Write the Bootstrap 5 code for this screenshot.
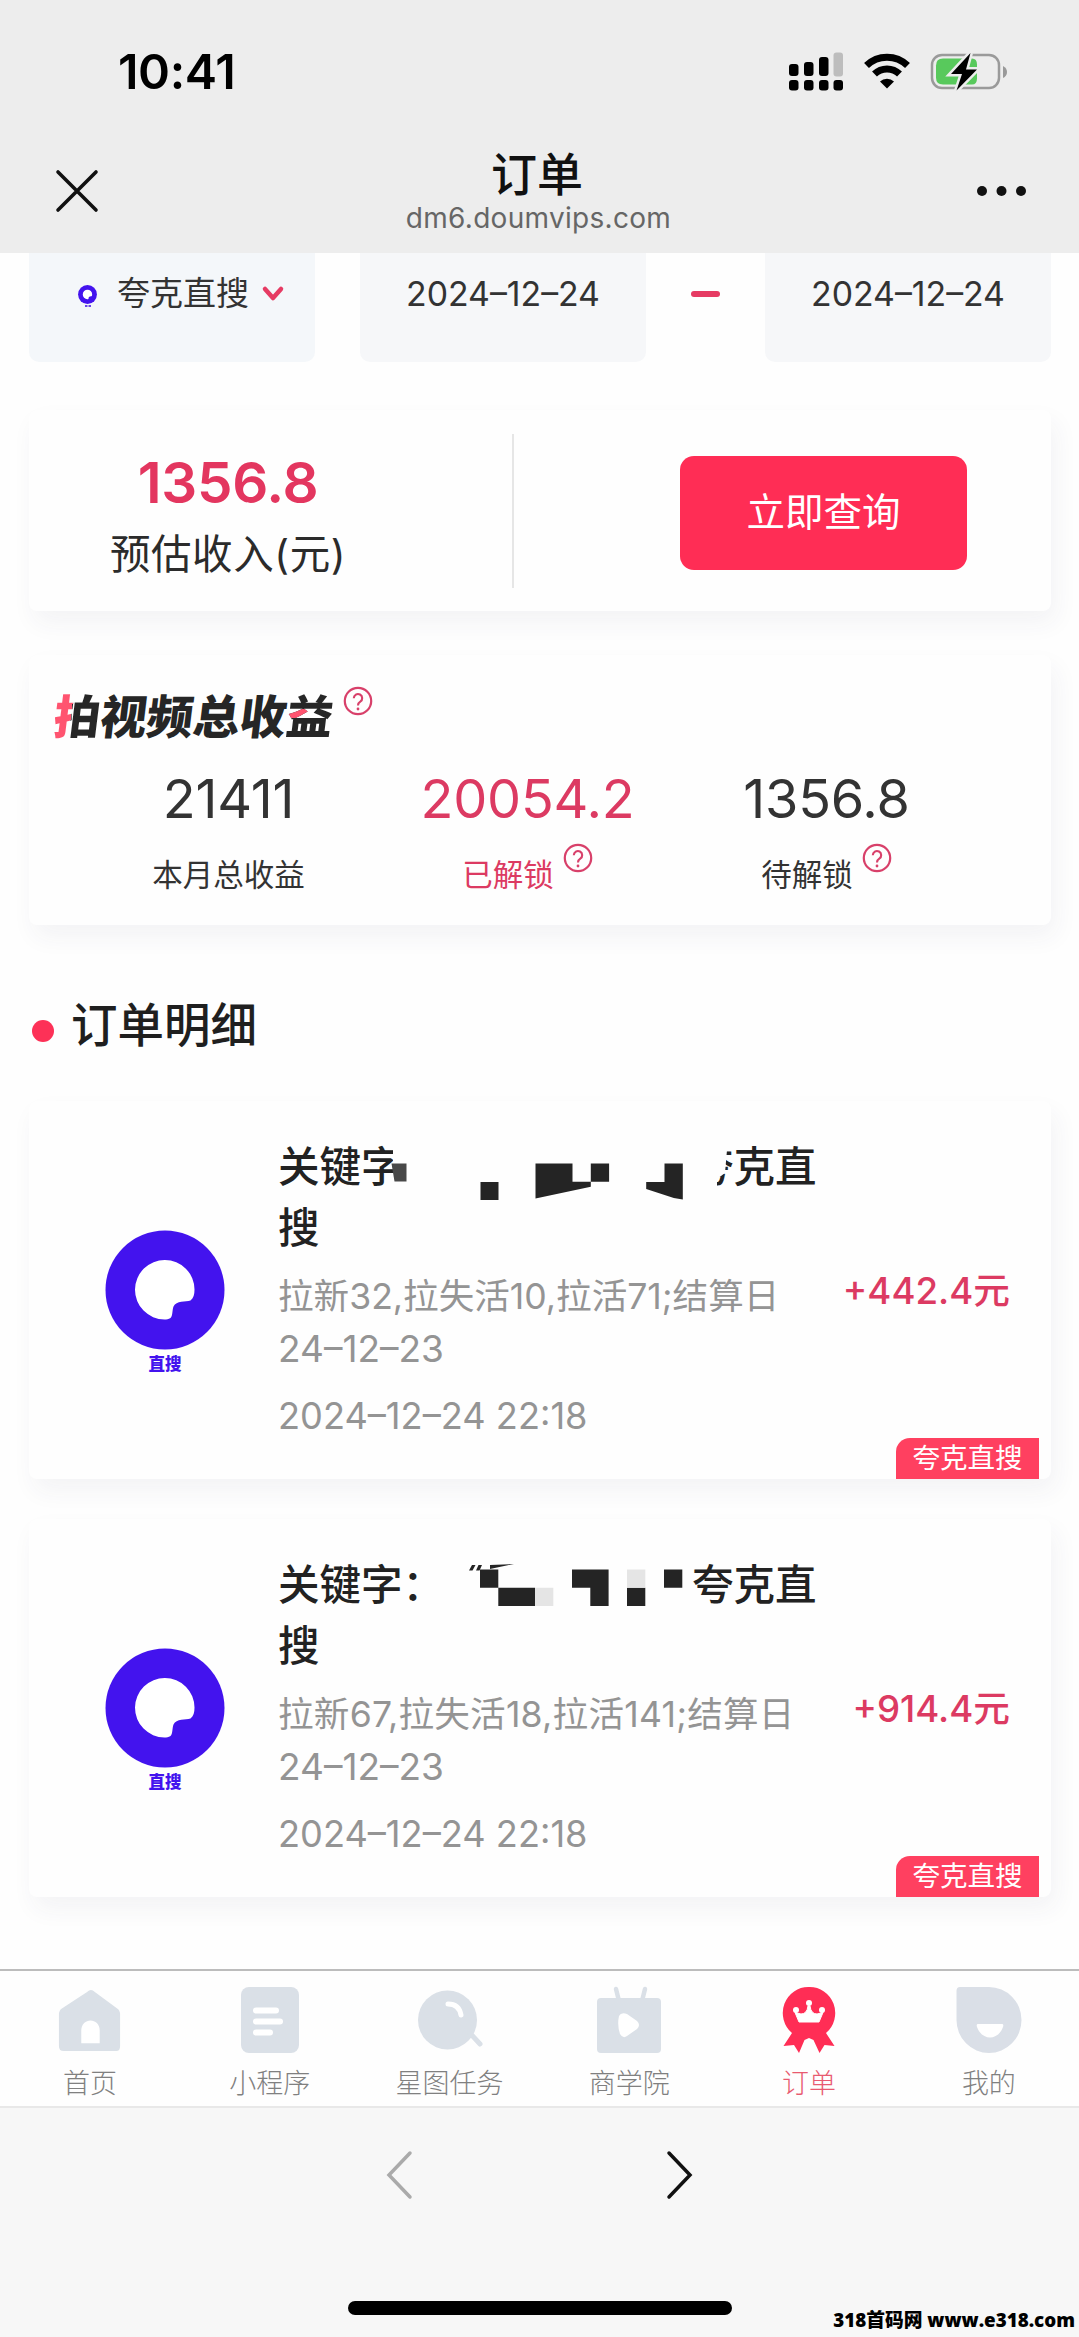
<!DOCTYPE html>
<html lang="zh-CN">
<head>
<meta charset="utf-8">
<meta name="viewport" content="width=device-width, initial-scale=1">
<title>订单</title>
<link href="https://cdn.jsdelivr.net/npm/bootstrap@5.3.0/dist/css/bootstrap.min.css" rel="stylesheet">
<style>
body{font-family:Inter,"Noto Sans CJK SC",sans-serif;color:#222;background:#fefefe;line-height:1;overflow:hidden}
.screen{width:1079px;height:2337px}
svg{display:block;flex:none;overflow:visible}
.topbar{background:#ededed;height:253px}
.status{height:144px;padding:0 73px 0 118px}
.status svg{margin-bottom:13px}
.clock{font-size:48.5px;font-weight:600;color:#000;letter-spacing:-.4px}
.titlebar{height:109px;padding:0 53px 0 56px}
.close-x{margin-top:26px}
.more-dots{margin-top:41px}
.page-title{font-size:46px;font-weight:500;line-height:46px;color:#111;margin-top:7px}
.domain{font-size:28px;color:#666;line-height:30px;letter-spacing:.3px;margin-top:6px;padding-left:3px}
.filters{padding:0 28px 0 29px;height:109px}
.filter-box{width:286px;height:109px;background:#f6f7f9;border-radius:0 0 10px 10px;padding-bottom:28px;font-size:33.8px;color:#333;white-space:nowrap}
.source-box{padding-left:49px;font-size:33px;background:#f4f7fa}
.dash{margin-bottom:28px}
.pink{color:#dc3a62}
.panel{margin:0 28px 0 29px;background:#fefefe;border-radius:8px;box-shadow:5px 12px 24px rgba(60,60,100,.055)}
.estimate{margin-top:48px;height:201px}
.est-side{width:398px;padding-top:11px}
.est-num{font-size:56.500px;font-weight:600;line-height:58px;letter-spacing:-.3px;color:#e3365f}
.est-label{font-size:40.5px;line-height:46px;margin-top:20px;color:#2b2b2b;letter-spacing:.6px}
.vline{width:2px;height:154px;background:#e6e6e6;margin-left:85px}
.query-side{padding:5px 84px 0 0}
.query{width:287px;height:114px;border-radius:14px;background:#ff2d55;color:#fff;font-size:38.5px;border:0}
.income{margin-top:44px;height:270px;padding:34px 0 0 25px}
.income-head svg{margin:-3px 0 0 10px}
.brand{font-size:46.500px;font-weight:900;line-height:56px;transform:skewX(-7deg);color:#262626}
.brand-red{background:linear-gradient(90deg,#ff5470 0 36%,#262626 36%);-webkit-background-clip:text;background-clip:text;color:transparent}
.brand-end{background:linear-gradient(#ff5470,#ff5470) 0 42%/45% 16% no-repeat,#262626;-webkit-background-clip:text;background-clip:text;color:transparent}
.sums{padding:24px 0 0 25px}
.sum-col{width:299px}
.sum-num{font-size:54px;line-height:60px;font-weight:400;letter-spacing:-.2px}
.sum-label{font-size:30.5px;line-height:36px;margin-top:28px}
.sum-label svg{margin:-14px 0 0 9px}
.ink{color:#333}
.section-head{height:60px;margin:70px 0 0 32px}
.section-name{font-size:46.5px;font-weight:500;color:#1f1f1f}
.dot{width:22px;height:22px;border-radius:50%;background:#fd3157;margin:11px 17px 0 0}
.order{height:378px;position:relative;padding:36px 41px 0 76px}
.order-first{margin-top:46px}
.order-next{margin-top:40px}
.order-logo{width:120px;margin-top:93px}
.logo-name{font-size:16.5px;font-weight:900;color:#4313ee;margin-top:6px}
.order-body{width:545px;margin-left:53px}
.kw{font-size:41.5px;line-height:61px;font-weight:500;white-space:nowrap}
.kw svg{transform:translate(1px,-2px);z-index:1}
.detail{font-size:35.6px;line-height:52px;color:#949494;margin-top:12px;white-space:nowrap}
.detail-wide{letter-spacing:.25px}
.detail-date{font-size:37px}
.stamp{font-size:36.2px;line-height:44px;color:#949494;margin-top:18px}
.amount{font-size:36.7px;font-weight:500;line-height:44px;margin-top:132px;white-space:nowrap}
.tag{position:absolute;right:12px;bottom:0;width:143px;height:41px;background:#ff4060;color:#fff;font-size:27.5px;border-radius:14px 0 0 0}
.tabs{height:139px;border-top:2px solid #bcbcbc;border-bottom:2px solid #e8e8e8;background:#fefefe}
.tab-item{width:179.8px;font-size:27px;font-weight:300;color:#808080;padding-top:15px}
.tab-item span{line-height:34px;margin-top:11px}
.tab-item.active{color:#e85a70}
.browser{background:#f7f7f7;height:229px;position:relative}
.navs{height:136px;padding:0 0 2px 0}
.nav-next{margin-left:255px}
.homebar{width:384px;height:14px;border-radius:7px;background:#000;margin:57px auto 0}
.watermark{position:absolute;right:4px;bottom:6px;font-family:"Open Sans","Noto Sans CJK SC",sans-serif;font-weight:800;font-size:18.8px;line-height:22px;color:#000;white-space:nowrap}
</style>
</head>
<body>
<svg width="0" height="0" class="position-absolute">
<symbol id="quark" viewBox="0 0 120 120"><circle cx="60" cy="60" r="59.5" fill="#4313ee"/><path d="M60 30a29.500 29.500 0 0 1 29.500 29.500c0 5-1 8.500-4 11-5 1.500-14 0-17 6-1.500 4-.5 9-3 11.500-2 1.500-4 1.500-6 1.500A29.600 29.600 0 0 1 60 30z" fill="#fff"/></symbol>
<symbol id="ask" viewBox="0 0 30 30"><circle cx="15" cy="15" r="13.200" fill="none" stroke="#d8406a" stroke-width="2.200"/><path d="M10.800 12.200a4.200 4.200 0 1 1 6.500 3.500c-1.700 1.100-2.300 1.900-2.300 3.700" fill="none" stroke="#d8406a" stroke-width="2.100"/><circle cx="15" cy="23" r="1.400" fill="#d8406a"/></symbol>
</svg>
<div class="screen d-flex flex-column">
<header class="topbar">
  <div class="status d-flex align-items-center justify-content-between">
    <div class="clock">10:41</div>
    <svg width="218" height="44" viewBox="0 0 218 44">
      <g fill="#000"><rect x="1" y="20" width="9.500" height="12" rx="3"/><rect x="16" y="18" width="9.500" height="14" rx="3"/><rect x="31" y="13" width="9.500" height="19" rx="3"/><rect x="1" y="36" width="9.500" height="10.500" rx="3"/><rect x="16" y="36" width="9.500" height="10.500" rx="3"/><rect x="31" y="36" width="9.500" height="10.500" rx="3"/><rect x="45.500" y="36" width="9.500" height="10.500" rx="3"/></g>
      <rect x="45.500" y="8.500" width="9.500" height="24" rx="3" fill="#bdbdbd"/>
      <g fill="none" stroke="#000" stroke-width="7"><path d="M78.500 21.500a29.500 29.500 0 0 1 41 0"/><path d="M86.500 30a18 18 0 0 1 25 0"/></g>
      <path d="M92 37.500a10 10 0 0 1 14 0l-7 7z"/>
      <rect x="144" y="11" width="67" height="33" rx="10" fill="none" stroke="#9a9a9a" stroke-width="2.500"/>
      <path d="M155 14.500h29q5 0 5 6v14q0 6-5 6h-29q-7 0-7-7v-12q0-7 7-7z" fill="#58c95c"/>
      <path d="M215 22q4 2 4 6t-4 6z" fill="#999"/>
      <path d="M182.500 9l-19.500 21h11l-5.500 16.500L189 25.500h-11z" fill="#000" stroke="#ededed" stroke-width="5" paint-order="stroke"/>
    </svg>
  </div>
  <div class="titlebar d-flex justify-content-between">
    <svg class="close-x" width="42" height="42" viewBox="0 0 42 42"><path d="M2 2l38 38M40 2L2 40" stroke="#111" stroke-width="3.600" stroke-linecap="round"/></svg>
    <div class="text-center"><div class="page-title">订单</div><div class="domain">dm6.doumvips.com</div></div>
    <svg class="more-dots" width="50" height="12" viewBox="0 0 50 12"><g fill="#111"><circle cx="6" cy="6" r="5"/><circle cx="25.500" cy="6" r="5"/><circle cx="45" cy="6" r="5"/></g></svg>
  </div>
</header>

<main class="flex-grow-1">
  <div class="filters d-flex align-items-center justify-content-between">
    <div class="filter-box source-box d-flex align-items-center">
      <div class="d-flex flex-column align-items-center pt-1 me-3 pe-1"><svg width="19" height="19"><use href="#quark"/></svg><svg width="6" height="3"><path d="M0 2h2.500M3.500 2h2.500" stroke="#6a45e8" stroke-width="2"/></svg></div>
      <span>夸克直搜</span>
      <svg class="ms-3" width="20" height="14" viewBox="0 0 20 14"><path d="M0 2l8 9 8-9" fill="none" stroke="#e63b63" stroke-width="4.500" stroke-linecap="round" stroke-linejoin="round"/></svg>
    </div>
    <div class="filter-box d-flex align-items-center justify-content-center">2024–12–24</div>
    <svg class="dash" width="29" height="6"><rect width="29" height="6" rx="3" fill="#e63b63"/></svg>
    <div class="filter-box d-flex align-items-center justify-content-center">2024–12–24</div>
  </div>

  <section class="panel estimate d-flex align-items-center">
    <div class="est-side text-center"><div class="est-num">1356.8</div><div class="est-label">预估收入(元)</div></div>
    <div class="vline"></div>
    <div class="query-side flex-grow-1 d-flex justify-content-end"><button class="query btn p-0">立即查询</button></div>
  </section>

  <section class="panel income">
    <div class="income-head d-flex">
      <div class="brand"><span class="brand-red">拍</span>视频总收<span class="brand-end">益</span></div>
      <svg width="30" height="30"><use href="#ask"/></svg>
    </div>
    <div class="sums d-flex text-center">
      <div class="sum-col ink"><div class="sum-num">21411</div><div class="sum-label">本月总收益</div></div>
      <div class="sum-col pink"><div class="sum-num">20054.2</div><div class="sum-label d-flex justify-content-center"><span>已解锁</span><svg width="30" height="30"><use href="#ask"/></svg></div></div>
      <div class="sum-col ink"><div class="sum-num">1356.8</div><div class="sum-label d-flex justify-content-center"><span>待解锁</span><svg width="30" height="30"><use href="#ask"/></svg></div></div>
    </div>
  </section>

  <div class="section-head d-flex align-items-center"><i class="dot"></i><span class="section-name">订单明细</span></div>

  <article class="panel order order-first d-flex">
    <div class="order-logo d-flex flex-column align-items-center"><svg width="120" height="120"><use href="#quark"/></svg><div class="logo-name">直搜</div></div>
    <div class="order-body">
      <div class="kw"><div class="d-flex"><span>关键字</span>
        <svg width="289.500" height="61" viewBox="0 0 289.500 61"><path d="M-11 5H331V15H323L321 38 313 44V57H-11z" fill="#fefefe"/><path d="M-12.500 28.500h15v18h-12z" fill="#484848"/><g fill="#242424"><path d="M76.500 47h18v18h-18zM131.500 28.500h37v18.300h18.300v5l-55.300 11.700zM186.800 28.500h18.300v18.300h-18.300zM260.500 28.500h18.300v36l-9-1.500-27.600-9v-7h18.300z"/></g></svg>
        <span>夸克直</span></div><div>搜</div></div>
      <div class="detail">拉新32,拉失活10,拉活71;结算日<br><span class="detail-date">24–12–23</span></div>
      <div class="stamp">2024–12–24 22:18</div>
    </div>
    <div class="amount pink ms-auto">+442.4元</div>
    <div class="tag d-flex align-items-center justify-content-center">夸克直搜</div>
  </article>

  <article class="panel order order-next d-flex">
    <div class="order-logo d-flex flex-column align-items-center"><svg width="120" height="120"><use href="#quark"/></svg><div class="logo-name">直搜</div></div>
    <div class="order-body">
      <div class="kw"><div class="d-flex"><span>关键字：</span>
        <svg width="248" height="61" viewBox="0 0 248 61"><g fill="#242424"><path d="M35 16.500h18.300v18.300H90v18.300H53.300V34.800H35zM127 16.500h36.600v36.600h-18.300V34.800H127zM182 34.800h18.300v18.300H182zM219 16.500h18.300v18.300H219zM27 12h3.500l-3 5.500h-3.500zM33.500 12h3.500l-2.500 5.500h-3.500zM45 12l24-1L45 16z"/></g><path d="M90 34.800h18.300v18.300H90zM182 16.500h18.300v18.300H182z" fill="#e5e5e5"/></svg>
        <span>夸克直</span></div><div>搜</div></div>
      <div class="detail"><span class="detail-wide">拉新67,拉失活18,拉活141;结算日</span><br><span class="detail-date">24–12–23</span></div>
      <div class="stamp">2024–12–24 22:18</div>
    </div>
    <div class="amount pink ms-auto">+914.4元</div>
    <div class="tag d-flex align-items-center justify-content-center">夸克直搜</div>
  </article>
</main>

<nav class="tabs d-flex">
  <div class="tab-item d-flex flex-column align-items-center"><svg width="66" height="70" viewBox="0 0 68 70"><path d="M35 3q-2 0-4 2L5 22q-3 2-3 6v33q0 5 5 5h54q4 0 4-5V28q0-4-3-6L39 5q-2-2-4-2z" fill="#dae0e7"/><path d="M25 58V45c0-14 19-14 19 0v13z" fill="#fff"/></svg><span>首页</span></div>
  <div class="tab-item d-flex flex-column align-items-center"><svg width="58" height="70" viewBox="0 0 58 70"><rect y="1" width="58" height="66" rx="8" fill="#dae0e7"/><path d="M15 24.500h20M15 35.500h24M15 46.500h14" stroke="#fff" stroke-width="6" stroke-linecap="round"/></svg><span>小程序</span></div>
  <div class="tab-item d-flex flex-column align-items-center"><svg width="64" height="70" viewBox="0 0 64 70"><circle cx="30.500" cy="34" r="29.500" fill="#dae0e7"/><path d="M52 46l11 12" stroke="#dae0e7" stroke-width="5" stroke-linecap="round"/><path d="M31 18q11 0 13 11" fill="none" stroke="#fff" stroke-width="5" stroke-linecap="round"/></svg><span>星图任务</span></div>
  <div class="tab-item d-flex flex-column align-items-center"><svg width="64" height="70" viewBox="0 0 64 70"><path d="M19 3l3 12M48 3l-3 12" stroke="#dae0e7" stroke-width="4.500" stroke-linecap="round"/><rect y="12" width="64" height="55" rx="4" fill="#dae0e7"/><path d="M22 30q2-4 8-2l10 7q4 4 0 8l-10 7q-4 3-7-2-3-9-1-18z" fill="#fff"/></svg><span>商学院</span></div>
  <div class="tab-item active d-flex flex-column align-items-center"><svg width="52" height="70" viewBox="0 0 52 70"><path d="M26 1a25.500 26 0 0 1 17 46l8.500 13-10-1-5 8-6-13-4.500-2-4.500 2-5.500 13-5-8-10.500 1L9 47A25.500 26 0 0 1 26 1z" fill="#ff2d55"/><path d="M16 36l-4-9.500 6 1.500q6 0 7-8h2q1 8 7 8l6-1.500L36 36z" fill="#fff" stroke="#fff"/><circle cx="26" cy="17" r="3" fill="#fff"/><circle cx="13" cy="24" r="3" fill="#fff"/><circle cx="39" cy="24" r="3" fill="#fff"/></svg><span>订单</span></div>
  <div class="tab-item d-flex flex-column align-items-center"><svg width="66" height="70" viewBox="0 0 66 70"><path d="M4 1h29a32.500 33 0 1 1-32.500 33V5q0-4 3.500-4z" fill="#dadfe7"/><path d="M22 38h24q2 0 1 3c-5 14-21 14-26 0q-1-3 1-3z" fill="#fff"/></svg><span>我的</span></div>
</nav>
<footer class="browser">
  <div class="navs d-flex align-items-center justify-content-center">
    <svg width="25" height="48" viewBox="0 0 25 48"><path d="M23 2L2 24l21 22" fill="none" stroke="#aaa" stroke-width="3.500" stroke-linecap="round"/></svg>
    <svg class="nav-next" width="25" height="48" viewBox="0 0 25 48"><path d="M2 2l21 22L2 46" fill="none" stroke="#111" stroke-width="3.500" stroke-linecap="round"/></svg>
  </div>
  <div class="homebar"></div>
  <div class="watermark">318首码网 www.e318.com</div>
</footer>
</div>
<script src="https://cdn.jsdelivr.net/npm/bootstrap@5.3.0/dist/js/bootstrap.bundle.min.js"></script>
</body>
</html>
